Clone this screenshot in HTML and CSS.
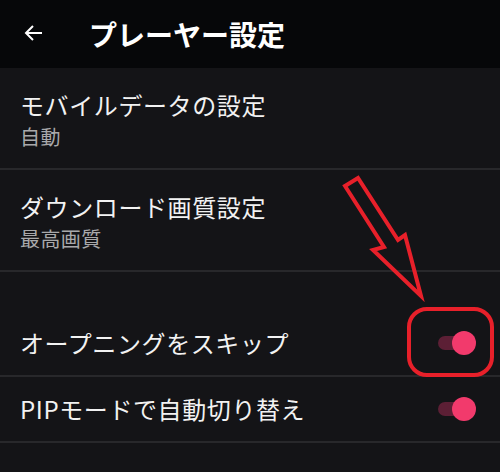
FILE: index.html
```
<!DOCTYPE html>
<html lang="ja">
<head>
    <meta charset="UTF-8">
    <meta name="viewport" content="width=device-width, initial-scale=1.0">
    <title>プレーヤー設定</title>
    <link rel="stylesheet" href="styles.css">
</head>
<body>
    <div id="screen">
        <header id="app-bar">
            <svg class="back-icon" viewBox="0 0 24 24" width="24" height="24">
                <path d="M20 12H5M11 5l-7 7 7 7" fill="none" stroke="#fff" stroke-width="2"/>
            </svg>
            <h1 class="bar-title">プレーヤー設定</h1>
        </header>

        <div class="settings-list">
            <div class="setting-row two-line">
                <div class="setting-title">モバイルデータの設定</div>
                <div class="setting-sub">自動</div>
            </div>
            <div class="setting-row two-line">
                <div class="setting-title">ダウンロード画質設定</div>
                <div class="setting-sub">最高画質</div>
            </div>
            <div class="setting-row toggle-row first-toggle">
                <div class="setting-title">オープニングをスキップ</div>
                <div class="switch"><span class="track"></span><span class="thumb"></span></div>
            </div>
            <div class="setting-row toggle-row">
                <div class="setting-title">PIPモードで自動切り替え</div>
                <div class="switch"><span class="track"></span><span class="thumb"></span></div>
            </div>
        </div>

        <!-- annotation drawn over the screenshot -->
        <svg class="annotation" viewBox="0 0 500 472" width="500" height="472">
            <polygon points="345,186 358,178 398,240 405,235 421,296 373,250 384,247" fill="none" stroke="#e8202a" stroke-width="4" stroke-linejoin="miter"/>
            <rect x="409" y="309" width="83" height="66" rx="18" ry="18" fill="none" stroke="#e8202a" stroke-width="4"/>
        </svg>
    </div>
</body>
</html>
```

FILE: styles.css
```
/* player settings screen */
* {
    box-sizing: border-box;
}

body {
    margin: 0;
    background-color: #141417;
    font-family: "Noto Sans CJK JP", "Noto Sans", sans-serif;
    color: #f0f0f0;
}

#screen {
    position: relative;
    width: 500px;
    height: 472px;
    overflow: hidden;
    background-color: #141417;
}

#app-bar {
    height: 68px;
    display: flex;
    align-items: center;
    background-color: #060709;
    padding-left: 22px;
}

.back-icon {
    display: block;
    margin-top: -2px;
}

.bar-title {
    margin: 0 0 0 43px;
    font-size: 28px;
    font-weight: 700;
    line-height: 34px;
    color: #ffffff;
}

.settings-list {
    display: flex;
    flex-direction: column;
}

.setting-row {
    border-bottom: 2px solid #28282b;
    padding: 0 24px 0 20px;
}

.two-line {
    height: 102px;
    padding-top: 20px;
}

.setting-title {
    font-size: 24px;
    line-height: 34px;
    letter-spacing: 0.6px;
    color: #f2f2f2;
}

.setting-sub {
    font-size: 20px;
    line-height: 30px;
    letter-spacing: 0.4px;
    color: #a9a9ab;
}

.toggle-row {
    height: 66px;
    display: flex;
    align-items: center;
    justify-content: space-between;
}

.first-toggle {
    height: 105px;
    padding-top: 39px;
}

.switch {
    position: relative;
    width: 38px;
    height: 24px;
}

.track {
    position: absolute;
    left: 0;
    top: 5px;
    width: 34px;
    height: 14px;
    border-radius: 7px;
    background-color: #5c1f35;
}

.thumb {
    position: absolute;
    right: 0;
    top: 0;
    width: 24px;
    height: 24px;
    border-radius: 50%;
    background-color: #f23a6c;
}

.annotation {
    position: absolute;
    left: 0;
    top: 0;
    pointer-events: none;
}
```
